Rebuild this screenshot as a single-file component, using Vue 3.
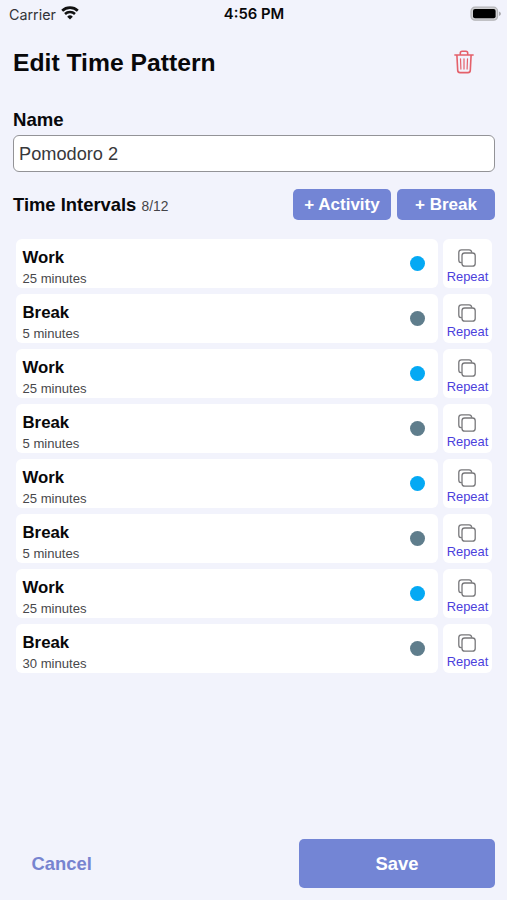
<script setup>
import { ref } from 'vue'

const name = ref('Pomodoro 2')
const intervals = ref([
  { type: 'Work', minutes: 25 },
  { type: 'Break', minutes: 5 },
  { type: 'Work', minutes: 25 },
  { type: 'Break', minutes: 5 },
  { type: 'Work', minutes: 25 },
  { type: 'Break', minutes: 5 },
  { type: 'Work', minutes: 25 },
  { type: 'Break', minutes: 30 },
])
</script>

<template>
  <main class="screen">
    <div class="status">
      <div class="carrier">
        <span>Carrier</span>
        <svg class="wifi" viewBox="0 0 18 14">
          <path d="M1.2 4.8a11.3 11.3 0 0 1 15.6 0" fill="none" stroke="#111" stroke-width="2.7" />
          <path d="M4 8a7.2 7.2 0 0 1 10 0" fill="none" stroke="#111" stroke-width="2.5" />
          <path d="M9 13.5 6.2 10.7a4 4 0 0 1 5.6 0z" fill="#111" />
        </svg>
      </div>
      <span class="clock">4:56 PM</span>
      <svg class="battery" viewBox="0 0 31 16">
        <rect x="1" y="1.2" width="26.6" height="13" rx="4" fill="#d0d0d3" stroke="#b4b4b7" stroke-width="1.2" />
        <rect x="3" y="3.1" width="22.6" height="9.2" rx="2" fill="#000" />
        <path d="M29 5.5q2 .8 2 2.3t-2 2.3z" fill="#aaaaae" />
      </svg>
    </div>

    <header class="heading">
      <h1>Edit Time Pattern</h1>
      <button class="trash" aria-label="Delete">
        <svg viewBox="0 0 20 24" fill="none" stroke="#e4606a" stroke-width="1.6" stroke-linecap="round" stroke-linejoin="round">
          <path d="M.9 5h18.2M6.3 4.8V3q0-1.8 1.8-1.8h3.8q1.8 0 1.8 1.8v1.8M2.9 5.2l.8 15.2q.1 2.2 2.3 2.2h8q2.2 0 2.3-2.2l.8-15.2" />
          <path d="m6.5 8.8.4 10.3M10 8.8v10.3M13.5 8.8l-.4 10.3" stroke-width="1.2" />
        </svg>
      </button>
    </header>

    <label class="label" for="name">Name</label>
    <input id="name" v-model="name" class="name">

    <div class="toolbar">
      <h2>Time Intervals <small>{{ intervals.length }}/12</small></h2>
      <button class="add">+ Activity</button>
      <button class="add">+ Break</button>
    </div>

    <ul class="list">
      <li v-for="(item, i) in intervals" :key="i" class="row">
        <div class="card">
          <div class="info">
            <strong>{{ item.type }}</strong>
            <span>{{ item.minutes }} minutes</span>
          </div>
          <i class="dot" :class="{ rest: item.type === 'Break' }"></i>
        </div>
        <button class="repeat">
          <svg viewBox="0 0 20 20" fill="none" stroke="#77777a" stroke-width="1.3">
            <rect x="5" y="5" width="13.2" height="13.2" rx="2.7" />
            <path d="M4.8 14.7H4q-2.2-.2-2.2-2.7V4.5q0-2.7 2.7-2.7H12q2.5 0 2.8 2.8" />
          </svg>
          <span>Repeat</span>
        </button>
      </li>
    </ul>

    <footer class="actions">
      <button class="cancel">Cancel</button>
      <button class="save">Save</button>
    </footer>
  </main>
</template>

<style>
body {
  background: #f2f3fc;
}
</style>

<style scoped>
* {
  box-sizing: border-box;
}
.screen {
  display: flex;
  flex-direction: column;
  width: 507px;
  height: 900px;
  overflow: hidden;
  background: #f2f3fc;
  color: #08080a;
  font-family: "Liberation Sans", Arial, sans-serif;
}
button {
  padding: 0;
  border: 0;
  background: none;
  font-family: inherit;
}
svg {
  display: block;
}
.status {
  display: grid;
  grid-template-columns: 1fr auto 1fr;
  align-items: center;
  height: 28px;
  padding: 0 8px 0 9px;
  font-family: Inter, sans-serif;
}
.carrier {
  display: flex;
  align-items: center;
  gap: 6px;
  color: #333337;
  font-size: 14.3px;
}
.wifi {
  width: 18px;
  height: 14px;
  margin: -2px 0 0 -0.5px;
}
.clock {
  font-size: 14.8px;
  font-weight: 600;
}
.battery {
  width: 31px;
  height: 16px;
  justify-self: end;
  margin: -1px -2px 0 0;
}
.heading {
  display: flex;
  align-items: center;
  justify-content: space-between;
  height: 70px;
  padding: 0 33px 0 13px;
}
h1 {
  margin: 0;
  font-size: 24.7px;
  line-height: 30px;
}
.trash {
  width: 20px;
  height: 24px;
  margin-top: -2px;
}
.label {
  height: 37px;
  padding: 11px 13px 0;
  font-size: 18.6px;
  font-weight: 700;
  line-height: 22px;
}
.name {
  height: 37px;
  margin: 0 12px 0 13px;
  padding: 1px 5px 0;
  border: 1px solid #939397;
  border-radius: 6px;
  outline: 0;
  background: #fff;
  color: #38383b;
  font-family: inherit;
  font-size: 18.2px;
}
.toolbar {
  display: flex;
  align-items: center;
  gap: 6px;
  height: 31px;
  margin: 17px 12px 0 13px;
}
h2 {
  flex: 1;
  margin: 3px 0 0;
  font-size: 18.4px;
  line-height: 22px;
}
small {
  color: #444448;
  font-size: 13.8px;
  font-weight: 400;
}
.add {
  width: 98px;
  height: 31px;
  border-radius: 5px;
  background: #7385d5;
  color: #fff;
  font-size: 17px;
  font-weight: 700;
}
.list {
  display: flex;
  flex-direction: column;
  gap: 6px;
  margin: 19px 15px 0 16px;
  padding: 0;
  list-style: none;
}
.row {
  display: flex;
  gap: 5px;
  height: 49px;
}
.card {
  display: flex;
  flex: 1;
  align-items: center;
  justify-content: space-between;
  padding: 0 13px 0 6.5px;
  border-radius: 6px;
  background: #fff;
}
.info {
  display: flex;
  flex-direction: column;
  padding-top: 9px;
}
.info strong {
  font-size: 16.8px;
  line-height: 21px;
}
.info span {
  color: #48484b;
  font-size: 13.1px;
  line-height: 21px;
}
.dot {
  width: 15px;
  height: 15px;
  border-radius: 50%;
  background: #05a9f4;
}
.dot.rest {
  background: #5f7d8c;
}
.repeat {
  display: flex;
  flex-direction: column;
  align-items: center;
  width: 49px;
  padding-top: 9px;
  border-radius: 6px;
  background: #fff;
  color: #4b40dd;
  font-size: 12.9px;
  line-height: 18px;
}
.repeat svg {
  width: 20px;
  height: 20px;
  margin: -0.5px 1px 0 0;
}
.repeat span {
  margin-top: 0.5px;
}
.actions {
  display: flex;
  justify-content: space-between;
  margin: auto 12px 12px 31.5px;
}
.actions button {
  height: 49px;
  border-radius: 5px;
  font-size: 18.4px;
  font-weight: 700;
}
.cancel {
  color: #7784d0;
}
.actions .save {
  width: 196px;
  background: #7385d5;
  color: #fff;
}
</style>
